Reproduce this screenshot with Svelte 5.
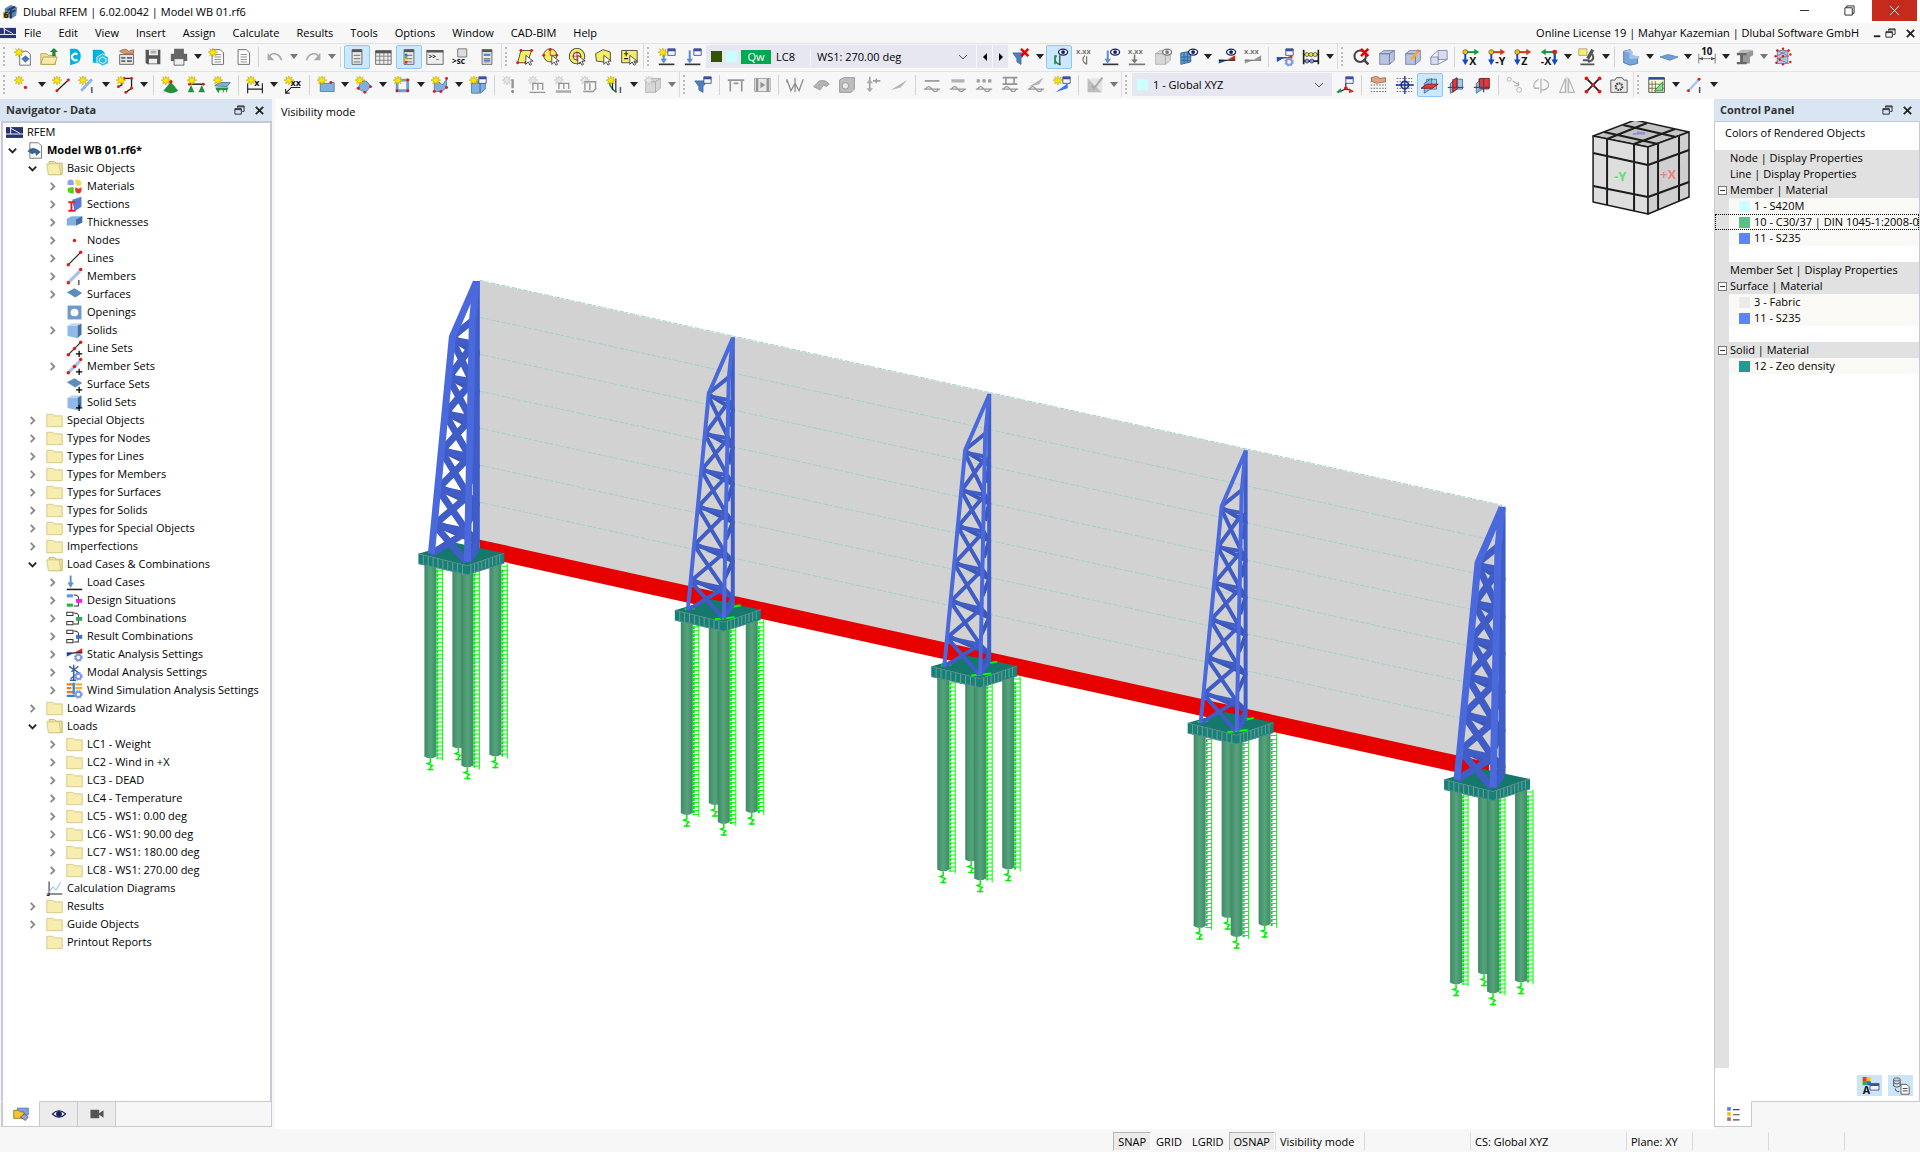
<script>
    const menus = ['File', 'Edit', 'View', 'Insert', 'Assign', 'Calculate', 'Results', 'Tools', 'Options', 'Window', 'CAD-BIM', 'Help']

    // little pieces shared by many toolbar icons
    const star = '<path d="M6 0l1 3 3-2-1.5 3L12 5 8.5 6.3 10 9.5 7 7.8 6 11 5 7.800 2 9.500 3 6.300 0 5l3.500-1L2 1l3 2z" fill="#ffe600" stroke="#b09a10" stroke-width=".6"/>'
    const dot = (x, y, r = 1.8) => `<circle cx="${x}" cy="${y}" r="${r}" fill="#e01818"/>`
    const line = (d, c = '#222', w = 1.4) => `<path d="${d}" fill="none" stroke="${c}" stroke-width="${w}"/>`
    const fill = (d, c, s = 'none') => `<path d="${d}" fill="${c}" stroke="${s}"/>`
    const label = (t, x, y, s = 9, c = '#111') => `<text x="${x}" y="${y}" font-size="${s}" font-weight="700" fill="${c}">${t}</text>`
    const eye = '<ellipse cx="16" cy="5" rx="5.500" ry="3.600" fill="#fff" stroke="#17205f" stroke-width="1.600"/><circle cx="16" cy="5" r="2.400" fill="#17205f"/>'
    const win = '<path d="M12 1h9v8h-9z" fill="#f4f6ff" stroke="#3a4374"/><path d="M12 1h9v3h-9z" fill="#3a4fa8"/>'
    const cursor = '<path d="M12 9v11l3-3 2 4 2-1-2-4h4z" fill="#fff" stroke="#333"/>'
    const load = line('M7 3v12', '#5b8fd0', 2.5) + fill('M3 13h8l-4 6z', '#5b8fd0') + line('M1 20h19', '#333', 2)
    const funnel = fill('M1 6h15l-5 7v7l-5-3v-4z', '#4f7fc0', '#44699c')
    const cross = line('M11 1l9 9M20 1l-9 9', '#e80000', 3)
    const gridDots = line('M2 3h19M2 7h19M2 11h19M2 15h19M2 19h19', '#555', 1).replace('/>', ' stroke-dasharray="2 1.500"/>')
    const panel = (x) => `<path d="M${x} 2h12v18h-12z" fill="#e8e8e8" stroke="#555"/><path d="M${x} 2h12v3h-12z" fill="#555"/>` + line(`M${x + 2} 9h8M${x + 2} 13h8M${x + 2} 17h8`, '#888', 1.5)
    const box = fill('M2 7h12v13H2zM2 7l5-4h13l-6 4zM14 7l6-4v12l-6 5z', '#b9c3e0', '#7480a5')
    const sheet = fill('M5 2h10l4 4v14H5z', '#fff', '#555') + line('M8 8h8M8 11h8M8 14h8M8 17h8', '#777', 1)
    const planes = fill('M7 4h12v12H7z', '#a6cbea', '#3c6b96') + fill('M4 9l9-6v12l-9 6z', '#8bb9de', '#3c6b96')
    const wave = line('M3 16q4-6 8 0t8 0M1 16h20', '#555', 1.4)
    const gear = (x, y) => `<circle cx="${x}" cy="${y}" r="3.500" fill="none" stroke="#7e9ae6" stroke-width="2.500"/><circle cx="${x}" cy="${y}" r="5" fill="none" stroke="#7e9ae6" stroke-width="1.500" stroke-dasharray="2 2"/>`
    const axes = (a, b, t, flip) => (flip
        ? line('M18 5H5M18 5v10', a, 2.4) + fill('M7 1v8L1 5z', a) + line('M18 5v10', b, 2.4) + fill('M14 14h8l-4 7z', b) + dot(18, 5, 3)
        : line('M4 5h12', a, 2.4) + fill('M15 1v8l6-4z', a) + line('M4 5v10', b, 2.4) + fill('M0 14h8l-4 7z', b) + `<circle cx="4" cy="5" r="3" fill="#f4c400" stroke="#333" stroke-width=".7"/>`)
        + label(t, flip ? 1 : 9, 21, 13)

    const icons = {
        new: fill('M7 4h9l4 4v13H7z', '#fff', '#556') + fill('M9 13l5-4 5 4-5 5z', '#4b78ad') + star,
        open: fill('M1 7h7l2 2h9v11H1z', '#efe39a', '#ad9d4c') + fill('M1 20l3-9h17l-3 9z', '#f5eaa9', '#ad9d4c') + fill('M15 10V5h-3l5-5 5 5h-3v5z', '#228a36'),
        dlubal: fill('M5 1h7q6 2 6 9t-6 9l-7 2z', '#00b3df') + '<path d="M14 8a4 4 0 1 0 0 6" fill="none" stroke="#fff" stroke-width="2.500"/>',
        cloud: fill('M1 2h9q5 1 6 6l-7 10H1z', '#00b3df') + fill('M13 7l7 4v8l-7 3-7-4v-7z', '#2abde4', '#fff') + line('M13 11l4 2v4l-4 2-4-2v-4z', '#fff', 1),
        block: fill('M2 8h17v12H2z', '#e6e6e6', '#555') + fill('M2 4q7-5 11 0l6-2v5H8z', '#d99873', '#94654b') + line('M4 12h5M11 12h6M4 16h5M11 16h6', '#666', 2),
        save: fill('M2 2h18v18H4l-2-2z', '#555') + fill('M6 2h11v7H6zM6 13h10v6H6z', '#f0f0f0') + line('M8 4h7M8 6h7', '#777', 1),
        print: fill('M5 1h12v6H5zM1 7h20v9H1z', '#666') + fill('M5 13h12v8H5z', '#eee', '#555'),
        report: sheet + star,
        doc: sheet,
        undo: line('M3 12c3-7 13-7 16 3', '#aaa', 2) + fill('M2 6v9h8z', '#aaa'),
        redo: line('M3 15C6 5 16 5 19 12', '#aaa', 2) + fill('M20 6v9h-8z', '#aaa'),
        navi: panel(5), tables: fill('M2 3h19v17H2z', '#eee', '#555') + line('M2 5h19', '#555', 3) + line('M2 10h19M2 15h19M7 6v14M12 6v14M17 6v14', '#777', 1),
        colors: panel(5) + fill('M6 7h3v3H6z', '#3366ff') + fill('M6 10h3v3H6z', '#36b34a') + fill('M6 13h3v3H6z', '#ffd400') + fill('M6 16h3v3H6z', '#e32222'),
        console: fill('M1 3h20v17H1z', '#eee', '#555') + line('M1 4h20', '#555', 3) + label('&gt;&gt;_', 3, 14, 8),
        script: fill('M7 1h11v10H7z', '#ddd', '#666') + label('&gt;sc', 0, 20, 10),
        pages: panel(5) + line('M7 8h8M7 15h8', '#4b82d0', 2),
        selPoly: fill('M6 3h13l-5 15H2z', '#f6ee62', '#333') + dot(6, 3) + dot(19, 3) + dot(2, 18) + dot(12, 18) + cursor,
        selCircle: '<circle cx="10" cy="9" r="8" fill="#f6ee62" stroke="#333"/>' + line('M10 1v8h8', '#e01818', 1) + dot(10, 2) + dot(18, 9) + dot(2, 9) + cursor,
        selRing: '<circle cx="11" cy="10" r="7" fill="none" stroke="#333" stroke-width="6"/><circle cx="11" cy="10" r="7" fill="none" stroke="#f6ee62" stroke-width="4"/>' + line('M5 10h12M11 4v12', '#e01818', 1) + cursor,
        selLasso: fill('M2 7l9-5 9 3v10l-8 2-9-1z', '#f6ee62', '#333') + cursor,
        selSpec: fill('M2 3h19v15H2z', '#f6ee62', '#333') + line('M5 7h5M7.500 4v6M5 13h5', '#222', 1.3) + cursor,
        lcNew: load + star + win, lc: load + win,
        filterOff: funnel + cross,
        showLoad: line('M6 20V9M13 20c-8-1-8-8-5-11', '#24964b', 2) + line('M12 21V9', '#333', 1.4) + eye,
        values: label('x.xx', 0, 7, 9, '#777') + line('M13 20q-8-5-2-11M13 20V10', '#777', 1.5),
        loadEye: load + eye, loadVal: label('x.xx', 0, 7, 9, '#777') + line('M8 8v8', '#777', 2) + fill('M4 14h8l-4 5z', '#777') + line('M1 20h20', '#777', 2),
        solidEye: box + eye, gridEye: fill('M1 6l12-2v13l-12 3z', '#5d9fd6', '#2e5c8d') + line('M5 5v14M9 5v13M1 11h13M1 15h13', '#2e5c8d', 1) + eye,
        resEye: fill('M1 19v-5l11 1z', '#2449b8') + fill('M12 14l9-5v6z', '#cc2a1a') + line('M1 15h20', '#222') + eye,
        resVal: label('x.xx', 0, 7, 9, '#777') + fill('M1 19v-5l10 1zM12 14l9-5v6z', '#999') + line('M1 15h20', '#777'),
        resSet: win + line('M1 12h15', '#222') + fill('M1 17v-5l9 0z', '#2449b8') + fill('M12 12l8-3v4z', '#cc2a1a') + gear(16, 17),
        abacus: line('M2 2v18M20 2v18M2 8h18M2 16h18', '#222', 2) + '<g stroke="#222" stroke-width=".7"><circle cx="6" cy="8" r="2.500" fill="#f1df4c"/><circle cx="11" cy="8" r="2.500" fill="#f1df4c"/><circle cx="16" cy="8" r="2.500" fill="#f1df4c"/><circle cx="6" cy="16" r="2.500" fill="#7f97de"/><circle cx="12" cy="16" r="2.500" fill="#7f97de"/></g>',
        zoomOff: '<circle cx="10" cy="10" r="7" fill="none" stroke="#444" stroke-width="2.500"/>' + line('M14 14l6 6', '#444', 3) + cross,
        box, boxEdit: box + line('M9 14l8-10', '#f0b020', 3.5) + line('M16 5l2-3', '#e57a9a', 3), boxes: fill('M1 11h9v9H1zM10 3h11v11H10z', '#d7ddf0', '#7480a5') + line('M1 11l9-8M10 20l11-6', '#7480a5', 1),
        vx: axes('#149b46', '#1648c4', 'X'), vy: axes('#d43a1c', '#1648c4', '-Y'), vz: axes('#d43a1c', '#1648c4', 'Z'), vmx: axes('#149b46', '#1648c4', '-X', true),
        micro: fill('M1 1h10v8H1z', '#fff15c', '#999') + line('M12 13l6-11', '#555', 4) + line('M17 7q5 8-5 10M3 20h17M6 15h8', '#555', 2.4),
        render: fill('M2 4l8-2v7l9 2v8l-9 2-8-3z', '#7aa5dc', '#4a73a8') + fill('M2 4l8-2 3 2v5l8 1v3H9V6z', '#a4c4ea'),
        plate: fill('M0 11l10-3 12 3-10 4z', '#6d9fd0', '#5684b5'),
        dim10: label('10', 4, 9, 12) + line('M1 7v12M21 7v12M1 13h20', '#666', 1) + fill('M1 13l5-2v4zM21 13l-5-2v4z', '#555'),
        beam: fill('M9 3h12v6l-4 2v8H9z', '#999') + fill('M1 6h12v3H9v8h4v3H1v-3h4V9H1z', '#666') + fill('M1 6l6-4h14l-8 4z', '#bbb'),
        cage: fill('M4 3h13v16H4z', '#b8c4dc', '#6b7ca3') + line('M4 3l14 7-14 3 14 6M17 3L3 10', '#778', 1) + [[4, 3], [11, 1], [18, 3], [2, 10], [11, 10], [20, 8], [3, 18], [11, 20], [20, 17], [7, 14]].map(([x, y]) => dot(x, y, 1.5)).join(''),
        node: star + dot(14, 14, 2),
        line: line('M6 18L20 5', '#222', 1.6) + dot(6, 18) + dot(20, 5) + star,
        member: line('M4 18L17 4', '#8db5e6', 3.5) + label('I', 15, 21, 11, '#445') + star,
        poly: line('M10 3h9v12l-7 5M7 3v8l-4 2', '#222', 1.6) + dot(10, 3) + dot(19, 3) + dot(19, 15) + dot(12, 20) + dot(3, 13) + star,
        nodeSup: fill('M12 7l9 11q-8 6-18 0z', '#239040') + dot(12, 7, 2.2) + star,
        lineSup: line('M3 10h17', '#222', 1.8) + dot(3, 10) + dot(20, 10) + fill('M5 11l4 9H1zM18 11l4 9h-8z', '#239040') + star,
        surfSup: fill('M2 12l5-4h14l-4 5z', '#7fb0e0', '#3c6ea0') + fill('M3 14h16l-3 7v-4h-2l-2 4v-4H8l-1 4-3-4z', '#239040') + star,
        dimX: label('x', 10, 12, 11) + line('M2 9v12M20 9v12M2 16h18', '#222') + star,
        dimXX: label('xx', 8, 12, 11) + line('M20 14H9l-7 7M2 16v5h5', '#222') + star,
        surf: fill('M4 9h13v-1h4v11H4z', '#7fb0e0', '#4a78ab') + dot(17, 8) + star,
        curved: fill('M6 8q8-6 13 5l-6 7-9-4z', '#7fb0e0', '#4a78ab') + dot(8, 6) + dot(19, 13) + dot(12, 20) + dot(4, 15) + star,
        opening: line('M5 5h13v13H5z', '#6c9ed0', 3.5) + dot(5, 5) + dot(18, 5) + dot(5, 18) + dot(18, 18) + star,
        solid: fill('M4 8h7l3 3 5-7v10l-6 5H4z', '#7fb0e0', '#4a78ab') + dot(19, 3) + dot(12, 19) + dot(4, 19) + dot(19, 14) + star,
        solidWin: fill('M3 9h10v12H3zM3 9l4-4h12l-5 4v12l6-5V6z', '#7fb0e0', '#4a78ab') + win + star,
        loadN: star + line('M13 4v11', '#555', 3) + dot(13, 19),
        loadM: star + line('M5 9h14M6 9v8M12 9v8M18 9v8M2 20h19', '#555', 1.6),
        loadS: star + line('M5 9h14M6 9v7M12 9v7M18 9v7', '#555', 1.6) + line('M2 19h19', '#777', 3),
        loadB: star + line('M5 7h14v10M6 9v8M12 9v8M4 19h12l4-4', '#555', 1.7),
        impf: line('M5 4q-3 9 8 16', '#1f8c3b', 2) + line('M8 3v14M12 3v16', '#222', 1.4) + label('I', 16, 21, 10, '#444') + star,
        wind: box + star,
        funnelWin: funnel + win,
        frame: line('M4 19V5h14v14M1 5h20M8 9h6', '#555', 2), film: fill('M2 3h19v16H2z', '#ddd', '#555') + line('M5 3v16M18 3v16', '#555', 3) + fill('M9 7l6 4-6 4z', '#555'),
        moment: line('M1 4l5 14 5-9 5 9 5-14M1 4v4M11 2v18', '#444', 1.5), shell: fill('M2 13l7-7q8-2 12 4l-3 3-4-2-4 6z', '#888', '#555'),
        cube: fill('M2 5l5-3h13v14l-4 4H2z', '#999', '#444') + '<circle cx="9" cy="12" r="4" fill="#ddd" stroke="#444"/>',
        react: line('M7 1v16M11 6h9M15 3v6', '#666', 2) + fill('M7 20l-4-5h8zM7 4L3 9h8z', '#777'), slim: fill('M1 17L21 5 13 14z', '#888'),
        r1: line('M2 6h18', '#555', 2) + wave, r2: line('M3 6h16', '#888', 4) + wave, r3: line('M2 6h4M9 6h4M16 6h4', '#666', 4) + wave,
        r4: line('M2 2h18M6 2v8M16 2v8M2 10h18', '#555', 2) + wave, r5: fill('M2 13L20 2l-5 8z', '#888') + wave,
        resNew: star + win + fill('M3 20L18 9v6z', '#4272e8'), edit: fill('M2 3h18v17H2z', '#d8d8d8') + fill('M2 3v17h17z', '#999') + line('M7 12l3 3L20 2', '#777', 2.4),
        csNew: win + line('M12 9v7l8 2M12 16l-10 4', '#222') + dot(12, 15, 2.3) + fill('M0 20l6-5 1 5z', '#149b46') + fill('M22 19l-6-4v6z', '#d43a1c'),
        gridHand: gridDots + fill('M3 2q8-3 10 1l7-1v5L9 9 3 6z', '#e0a47c', '#9b694c'), snap: gridDots + '<circle cx="12" cy="11" r="4.500" fill="#eee" stroke="#1a2f91" stroke-width="2"/>' + line('M12 0v22M1 11h22', '#1a2f91', 1.6),
        pXY: planes + fill('M0 15l7-5h14l-7 5z', '#ed3636', '#711'), pXZ: planes + fill('M7 6l5-4v14l-5 4z', '#ed3636', '#711') + line('M1 14h19', '#28517a', 1.5), pYZ: planes + fill('M8 3h12v12H8z', '#ed3636', '#711') + line('M1 14h19M13 3v17', '#28517a', 1.5),
        move: '<circle cx="4" cy="4" r="2.500" fill="none" stroke="#777"/><circle cx="16" cy="17" r="3" fill="none" stroke="#777"/>' + line('M8 6l8 5M15 7v5h-5', '#777', 1.3),
        rotate: line('M8 4q-8 5-5 11h6M14 4q8 3 6 9-2 4-8 4M11 3v18', '#888', 1.6), mirror: line('M9 3v17H2zM13 3v17h7z', '#888', 1.4) + line('M11 1v20', '#888', 1),
        cutx: line('M3 3l16 16M19 3L3 19', '#222', 2.2) + dot(3, 3, 2.3) + dot(19, 3, 2.3) + dot(3, 19, 2.3) + dot(19, 19, 2.3) + dot(11, 11, 2.3),
        camera: fill('M1 5h5l2-3h7l2 3h4v15H1z', '#e9e9e9', '#444') + '<circle cx="11" cy="13" r="4" fill="none" stroke="#444" stroke-width="2.500" stroke-dasharray="2 1"/>',
        design: fill('M1 2h19v18H1z', '#fffbd0', '#333') + line('M1 3h19', '#2c4d9a', 3) + line('M5 6v14M9 6v14M1 10h19M1 15h19', '#444', .8) + fill('M8 18h10V7z', '#83dd91', '#257a38'),
        memberI: line('M3 18L16 4', '#a5c7ef', 3) + dot(3, 18) + dot(16, 4) + label('I', 15, 21, 10, '#333'),
        // navigator
        app: fill('M0 4h22v14H0z', '#27346f') + line('M0 13h22M6 4v9M5 5l13 7', '#fff', 1.2),
        model: fill('M5 1h11l4 4v16H5z', '#fff', '#555') + fill('M2 12q6-9 17 1l-6 5-1-4-4 2z', '#39668f'),
        folder: fill('M1 3h8l2 2h10v14H1z', '#f6edae', '#cdbf78'),
        folderOpen: fill('M4 2h7l2 2h8v15H4z', '#eee29c', '#b9aa5e') + fill('M1 5h16l2 14H3z', '#f6edae', '#cdbf78'),
        mat: fill('M2 9q-1-7 4-7t4 7z', '#929ff0') + fill('M12 2q7 0 8 4t-4 4-4-8z', '#eee04a') + fill('M10 12v8q-7 1-8-4t8-4z', '#54cf1e') + fill('M12 12l4 2 4-2q1 8-4 8t-4-8z', '#e8362e'),
        sect: fill('M8 5l12-4v13l-9 6z', '#5b7ad5') + line('M3 8h9M7 8v11M3 19h9', '#e12424', 2.5),
        thick: fill('M1 6l6-3h14v8l-8 4H1z', '#83b0e2') + fill('M13 7l8-4v8l-8 4z', '#416fa6'),
        nd: dot(11, 11, 2.2), ln: line('M4 18L19 3', '#222', 1.5) + dot(3, 19, 2.2) + dot(19, 3, 2.2),
        mem: line('M3 19L18 4', '#a5c3ea', 4) + dot(3, 19, 2.2) + dot(19, 2, 2.2) + label('I', 15, 22, 10, '#333'),
        srf: fill('M1 8l10-5 10 6-9 6z', '#5b8dbd'), opn: fill('M2 2h18v18H2z', '#6f9bc9') + '<circle cx="11" cy="11" r="5" fill="#fff"/>',
        sld: fill('M2 5h13v16L2 18z', '#8fb9e8') + fill('M2 5l5-3h13l-5 3z', '#b5d2f2') + fill('M15 5l5-3v14l-5 5z', '#426fa5'),
        calc: line('M4 2v18H1M1 18h20', '#222', 1.3) + line('M4 16l5-7 4 4 6-10', '#9fcaf5', 1.5),
        ldc: line('M6 2v10', '#5b8fd0', 2.5) + fill('M2 11h8l-4 7z', '#5b8fd0') + line('M1 20h20', '#222', 2),
        modal: line('M10 1v20M4 3l12 8-10 8M5 21h8M16 3l-9 7', '#315f9e', 1.8) + gear(16, 16),
        stat: fill('M1 14V9l9 0z', '#2449b8') + fill('M10 9l11-6v6z', '#cc2a1a') + line('M1 9h20', '#222') + gear(16, 15),
        simu: line('M1 3h8M1 8h6M1 13h8', '#ef7c1a', 3) + line('M12 3h9M12 8h9', '#f2b12e', 3) + line('M1 18h12M10 1v15', '#3a85cb', 3) + gear(16, 16),
        eye: '<path d="M2 11q9-9 18 0-9 9-18 0z" fill="#fff" stroke="#17205f" stroke-width="1.500"/><circle cx="11" cy="11" r="4" fill="#17205f"/>',
        video: fill('M2 5h12v12H2zM14 10l6-4v10l-6-4z', '#555'),
        data: fill('M6 3h15v9H6z', '#7fa5e8', '#3561b8') + fill('M1 6h7l2 2h5v9H1z', '#f3c72d', '#7a6010') + fill('M10 15l6-4 5 4-4 5z', '#7db0d8', '#b02a2a'),
        legend: line('M3 4h5', '#4e83f0', 5) + line('M3 11h5', '#f2c500', 5) + line('M3 18h5', '#bb6464', 5) + line('M11 5h9M11 12h9M11 19h9', '#444', 1.6),
        palette: fill('M2 0h5v5H2z', '#e33') + fill('M7 0h5v5H7z', '#fc0') + fill('M2 5h5v5H2z', '#3a3') + fill('M7 5h5v5H7z', '#36d') + label('A', 2, 21, 13) + fill('M11 8h11v8H11z', '#f4f6ff', '#3a4374') + fill('M11 8h11v3H11z', '#3a4fa8'),
        dbdoc: '<ellipse cx="6" cy="3" rx="4" ry="2" fill="#ccc" stroke="#555"/>' + line('M2 3v8q4 3 8 0V3M2 7q4 3 8 0', '#555', 1.2) + fill('M11 9h7l3 3v9H11z', '#fff', '#444') + line('M13 14h6M13 17h6M4 14q0 4 5 4', '#444', 1.2)
    }
    const combo = (a, b) => (a ? fill('M1 3h8v4H1z', a) + fill('M1 15h8v4H1z', a === '#fff' ? a : '#2fae48') : '')
        + line('M1 3h8v4H1zM1 15h8v4H1z', '#333', a === '#fff' ? 1.3 : 0) + line('M10 4q8 0 6 6M10 18h6v-5', '#333', 1.3) + fill('M13 9h8v5h-8z', b)
    icons.design2 = combo('#5d92ee', '#f01ff0')
    icons.loadc = combo('#fff', '#2fae48')
    icons.resc = combo('#fff', '#3c6fd0')
    const plus = line('M17 14v8M13 18h8', '#000', 1.6)
    icons.lnSet = icons.ln + dot(11, 11, 2.2) + plus
    icons.memSet = line('M3 19L18 4', '#a5c3ea', 4) + dot(3, 19, 2.2) + dot(11, 11, 2.2) + dot(19, 2, 2.2) + plus
    icons.srfSet = icons.srf + plus
    icons.sldSet = icons.sld + plus

    // | separator, v drop-down arrow, # new group, ! pressed, ~ disabled, @ combo box
    const parse = (s) => s.split(' ').map((t) => ({ on: t[0] === '!', off: t[0] === '~', name: t.replace(/^[!~]/, '') }))
    const rows = [
        parse('new open dlubal cloud block save print v report doc | undo ~v redo ~v | !navi tables !colors console script pages # selPoly selCircle selRing selLasso selSpec # lcNew lc @lc filterOff v !showLoad values loadEye loadVal ~solidEye gridEye v resEye resVal | resSet abacus v # zoomOff box boxEdit boxes | vx vy vz vmx v micro v | render v plate v dim10 v beam ~v cage'),
        parse('node v line member v poly v | nodeSup lineSup surfSup | dimX v dimXX | surf v curved v opening v solid v solidWin | ~loadN ~loadM ~loadS ~loadB impf v ~wind ~v # funnelWin | ~frame ~film | ~moment ~shell ~cube ~react ~slim | ~r1 ~r2 ~r3 ~r4 ~r5 resNew | ~edit ~v # @cs csNew | gridHand snap !pXY pXZ pYZ | ~move ~rotate ~mirror cutx camera # design v memberI v')
    ]

    // depth, icon, text, chevron (0 none, 1 closed, 2 open)
    const F = 'folder', O = 'folderOpen'
    const tree = [
        [0, 'model', 'Model WB 01.rf6*', 2], [1, O, 'Basic Objects', 2],
        [2, 'mat', 'Materials', 1], [2, 'sect', 'Sections', 1], [2, 'thick', 'Thicknesses', 1], [2, 'nd', 'Nodes', 1],
        [2, 'ln', 'Lines', 1], [2, 'mem', 'Members', 1], [2, 'srf', 'Surfaces', 1], [2, 'opn', 'Openings', 0],
        [2, 'sld', 'Solids', 1], [2, 'lnSet', 'Line Sets', 0], [2, 'memSet', 'Member Sets', 1],
        [2, 'srfSet', 'Surface Sets', 0], [2, 'sldSet', 'Solid Sets', 0],
        [1, F, 'Special Objects', 1], [1, F, 'Types for Nodes', 1], [1, F, 'Types for Lines', 1], [1, F, 'Types for Members', 1],
        [1, F, 'Types for Surfaces', 1], [1, F, 'Types for Solids', 1], [1, F, 'Types for Special Objects', 1], [1, F, 'Imperfections', 1],
        [1, O, 'Load Cases & Combinations', 2], [2, 'ldc', 'Load Cases', 1], [2, 'design2', 'Design Situations', 1],
        [2, 'loadc', 'Load Combinations', 1], [2, 'resc', 'Result Combinations', 1], [2, 'stat', 'Static Analysis Settings', 1],
        [2, 'modal', 'Modal Analysis Settings', 1], [2, 'simu', 'Wind Simulation Analysis Settings', 1],
        [1, F, 'Load Wizards', 1], [1, O, 'Loads', 2],
        [2, F, 'LC1 - Weight', 1], [2, F, 'LC2 - Wind in +X', 1], [2, F, 'LC3 - DEAD', 1], [2, F, 'LC4 - Temperature', 1],
        [2, F, 'LC5 - WS1: 0.00 deg', 1], [2, F, 'LC6 - WS1: 90.00 deg', 1], [2, F, 'LC7 - WS1: 180.00 deg', 1], [2, F, 'LC8 - WS1: 270.00 deg', 1],
        [1, 'calc', 'Calculation Diagrams', 0], [1, F, 'Results', 1], [1, F, 'Guide Objects', 1], [1, F, 'Printout Reports', 0]
    ]

    const legend = [
        { t: 'Node | Display Properties' }, { t: 'Line | Display Properties' }, { t: 'Member | Material', box: true },
        { t: '1 - S420M', c: '#ccffff' }, { t: '10 - C30/37 | DIN 1045-1:2008-08', c: '#5bbd87', sel: true }, { t: '11 - S235', c: '#5b84ff' }, {},
        { t: 'Member Set | Display Properties' }, { t: 'Surface | Material', box: true },
        { t: '3 - Fabric', c: '#ebebeb' }, { t: '11 - S235', c: '#5b84ff' }, {},
        { t: 'Solid | Material', box: true }, { t: '12 - Zeo density', c: '#219a90' }
    ]

    // lattice masts of the wall, all drawn from one template whose origin is the tip
    const masts = [0, 1, 2, 3, 4].map((i) => ({ x: 476.5 + 256.6 * i, y: 280 + 56.5 * i, heavy: i === 0 || i === 4 }))
    const L = [60, 98, 134, 171, 209, 245, 274]
    const R = [64, 102, 139, 177, 216, 252, 282]
    const lx = (y) => -24 - 21 * (y - 57) / 217
    const rx = (y) => -9 * y / 282 - 1
    let braces = 'M-24 57L-3 40'
    let back = ''
    for (let i = 0; i < 6; i++) {
        braces += `M${lx(L[i])} ${L[i]}L${rx(R[i])} ${R[i]}M${lx(L[i])} ${L[i]}L${rx(R[i + 1])} ${R[i + 1]}M${lx(L[i + 1])} ${L[i + 1]}L${rx(R[i])} ${R[i]}`
        back += `M${lx(L[i])} ${L[i] - 2}L0 ${R[i] + 9}M${rx(R[i])} ${R[i] + 26}L0 ${R[i] + 9}L${rx(R[i])} ${R[i]}`
    }
    const piles = [
        { x: -24, w: 12, b: 467 }, { x: -52, w: 12, b: 477, l: -40 }, { x: 13, w: 12, b: 475, l: 25 }, { x: -15, w: 12, b: 486, l: -3 }
    ]
    let ticks = ''
    for (let i = 1; i < 10; i++) ticks += `M${-58 + i * 4.9} ${272 + i * 1.25}v10M${-9 + i * 3.6} ${284 - i * 1.3}v9`
</script>

{#snippet icon(name)}
    <svg class="icon" viewBox="0 0 22 22" aria-hidden="true">{@html icons[name]}</svg>
{/snippet}

{#snippet winButtons()}
    <span class="win-buttons">
        <button aria-label="Float"><svg viewBox="0 0 12 12"><path d="M4 3V1h7v6H9M1 4h7v6H1zM1 5h7M4 2h7" /></svg></button>
        <button aria-label="Close"><svg viewBox="0 0 12 12"><path d="M2 2l8 8M10 2l-8 8" stroke-width="2" /></svg></button>
    </span>
{/snippet}

<div class="window">
    <header class="title-bar">
        <svg class="logo" viewBox="0 0 18 18"><path d="M3 5l7-4 7 3-1 9-6 4-7-4z" fill="#5d82ad" /><path d="M6 7l9-4M7 11l8-4M10 16V6" stroke="#223c66" stroke-width="2" /><path d="M1 9h6v7H1z" fill="#d9b32a" /><text x="2" y="16" font-size="9" font-weight="700">6</text></svg>
        <span>Dlubal RFEM | 6.02.0042 | Model WB 01.rf6</span>
        <div class="system">
            <button aria-label="Minimize"><svg viewBox="0 0 12 12"><path d="M1 6h10" /></svg></button>
            <button aria-label="Restore"><svg viewBox="0 0 12 12"><path d="M1 3h8v8H1zM3 3V1h8v8H9" /></svg></button>
            <button class="quit" aria-label="Close"><svg viewBox="0 0 12 12"><path d="M1 1l10 10M11 1L1 11" /></svg></button>
        </div>
    </header>

    <nav class="menu-bar">
        {@render icon('app')}
        <div class="menus">
            {#each menus as menu}
                <button>{menu}</button>
            {/each}
        </div>
        <span class="license">Online License 19 | Mahyar Kazemian | Dlubal Software GmbH</span>
        <button class="mini" aria-label="Minimize model"><svg viewBox="0 0 12 12"><path d="M2 9h7" stroke-width="2" /></svg></button>
        {@render winButtons()}
    </nav>

    {#each rows as row}
        <div class="toolbar" role="toolbar">
            <i class="grip"></i>
            {#each row as item}
                {#if item.name === '|'}
                    <i class="sep"></i>
                {:else if item.name === '#'}
                    <i class="group"></i><i class="grip"></i>
                {:else if item.name === 'v'}
                    <button class="more" class:off={item.off} aria-label="More"></button>
                {:else if item.name === '@lc'}
                    <div class="load-case">
                        <i class="swatch dark"></i><i class="swatch"></i><b>Qw</b><span>LC8</span>
                        <select aria-label="Load case"><option>WS1: 270.00 deg</option></select>
                        <button class="prev" aria-label="Previous"></button>
                        <button class="next" aria-label="Next"></button>
                    </div>
                {:else if item.name === '@cs'}
                    <div class="load-case coords">
                        <i class="swatch"></i>
                        <select aria-label="Coordinate system"><option>1 - Global XYZ</option></select>
                    </div>
                {:else}
                    <button class="tool" class:on={item.on} class:off={item.off} aria-label={item.name}>{@render icon(item.name)}</button>
                {/if}
            {/each}
        </div>
    {/each}

    <main>
        <aside class="navigator">
            <h2>Navigator - Data {@render winButtons()}</h2>
            <div class="nav-body">
                <ul>
                    <li class="root">{@render icon('app')}<span>RFEM</span></li>
                    {#each tree as [depth, name, text, chev]}
                        <li class:model={depth === 0} class:level1={depth === 1} class:level2={depth === 2}>
                            <svg class="chev" class:open={chev === 2} viewBox="0 0 12 12">
                                {#if chev}<path d={chev === 2 ? 'M2 4l4 4 4-4' : 'M4 2l4 4-4 4'} />{/if}
                            </svg>
                            {@render icon(name)}<span>{text}</span>
                        </li>
                    {/each}
                </ul>
            </div>
            <div class="tabs">
                <button class="current" aria-label="Data">{@render icon('data')}</button>
                <button aria-label="Display">{@render icon('eye')}</button>
                <button aria-label="Views">{@render icon('video')}</button>
                <i></i>
            </div>
        </aside>

        <section class="viewport">
            <p>Visibility mode</p>
            <svg class="scene" viewBox="275 121 1440 1008" preserveAspectRatio="xMinYMin meet">
                <defs>
                    <linearGradient id="pile"><stop offset="0" stop-color="#3f8a66" /><stop offset=".5" stop-color="#55a57c" /><stop offset="1" stop-color="#41896a" /></linearGradient>
                    <g id="pad">
                        {#each piles as p}
                            <path d="M{p.x} 276V{p.b - 2}q{p.w / 2} 4 {p.w} 0V276z" fill="url(#pile)" />
                            <path d="M{p.x + 6} {p.b}v4l-3 1 5 2-2 2v3M{p.x + 3} {p.b + 11}h6" fill="none" stroke="#0e0" stroke-width="1.500" />
                            {#if p.l}
                                <path d="M{p.l + 1} 288V{p.b}" stroke="#0d2" stroke-width="2" stroke-dasharray="3 1" />
                                <path d="M{p.l + 3} 284V{p.b}" stroke="#0f0" stroke-width="6" stroke-dasharray="1 3" />
                                <path d="M{p.l + 6} 282V{p.b + 2}" stroke="#0f0" />
                            {/if}
                        {/each}
                        <path d="M-58 272L-21 261 28 271.500-9 284z" fill="#14786c" />
                        <path d="M-58 272L-9 284 28 271.500v10L-9 293-58 282z" fill="#178077" />
                        <path d={ticks} stroke="#6b9f98" />
                        <path d="M-58 272L-9 284 28 271.500M-58 282L-9 293 28 281.500" fill="none" stroke="#5a8c88" />
                    </g>
                    <g id="lattice" fill="none" stroke-linejoin="round">
                        <path d={back} stroke="#3d57b8" />
                        <path d={braces} stroke="#405cc6" />
                        <path d="M0 1V269M0 269L-9 282" stroke="#3f5dc8" />
                        <path d="M0 2L-24 57L-45 274M0 2L-4 42L-9 282" stroke="#4a69dc" />
                    </g>
                </defs>
                <path d="M480 281L1503 506V767L480 541z" fill="#d2d2d2" />
                {#each [0, 37, 74, 111, 148, 185, 222] as y}
                    <path d="M480 {280.5 + y}L1503 {505.5 + y}" stroke="#9fcfcf" stroke-dasharray="5 1 3 2" />
                {/each}
                <path d="M480 540L1490 763V780L480 557z" fill="#e60000" />
                {#each masts as m}
                    <g transform="translate({m.x} {m.y})">
                        <use href="#pad" y="2" />
                        {#if !m.heavy}<path d="M-48 273l10-1M-18 283l20-2M-2 271l10-2" stroke="#0f0" stroke-width="2" />{/if}
                        <use href="#lattice" stroke-width={m.heavy ? 7 : 4} />
                    </g>
                {/each}

                <g stroke="#1c1c1c" stroke-width="1.500" stroke-linejoin="round">
                    <path d="M1594 136L1636 120 1690 132 1649 147z" fill="#c4c4c4" />
                    <path d="M1594 136L1649 147V214L1594 202z" fill="#dedede" />
                    <path d="M1649 147L1690 132V197L1649 214z" fill="#cfcfcf" />
                    <path d="M1608 139v66M1635 144v67M1594 153l55 12 41-15M1594 186l55 11 41-15M1659 143v67M1680 136v65M1608 139l40-16M1635 144l41-15M1605 132l54 12M1624 125l53 12" fill="none" stroke-width="2" />
                </g>
                <text x="1615" y="181" font-size="13" font-weight="700" fill="#5fe070">-Y</text>
                <text x="1661" y="179" font-size="13" font-weight="700" fill="#f08080">+X</text>
                <path d="M1634 134l12-1M1638 132l8 2" stroke="#8f90d8" stroke-width="2" />
            </svg>
        </section>

        <aside class="control">
            <h2>Control Panel {@render winButtons()}</h2>
            <div class="control-body">
                <p>Colors of Rendered Objects</p>
                <ul>
                    {#each legend as row}
                        <li class:head={row.t && !row.c} class:entry={row.c} class:selected={row.sel}>
                            <span class="gutter">{#if row.box}<svg viewBox="0 0 9 9"><path d="M0 0h9v9H0z" fill="#fff" stroke="#777" stroke-width="2" /><path d="M2 4.500h5" stroke="#333" /></svg>{/if}</span>
                            <span class="text">{#if row.c}<i style="background: {row.c}"></i>{/if}{row.t ?? ''}</span>
                        </li>
                    {/each}
                    <li class="rest"><span class="gutter"></span></li>
                </ul>
                <div class="actions">
                    <button aria-label="Edit colors">{@render icon('palette')}</button>
                    <button aria-label="Copy legend">{@render icon('dbdoc')}</button>
                </div>
            </div>
            <div class="tabs">
                <button class="current" aria-label="Legend">{@render icon('legend')}</button>
                <i></i>
            </div>
        </aside>
    </main>

    <footer>
        <button class="pressed">SNAP</button>
        <button>GRID</button>
        <button>LGRID</button>
        <button class="pressed">OSNAP</button>
        <span class="mode">Visibility mode</span>
        <span class="blank"></span>
        <span class="cs">CS: Global XYZ</span>
        <span class="plane">Plane: XY</span>
        <span class="cell"></span>
        <span class="cell"></span>
        <span class="cell"></span>
    </footer>
</div>

<style>
    :global(body) {
        margin: 0;
    }

    .window {
        display: flex;
        flex-direction: column;
        min-height: 100vh;
        background: #f7f7f7;
        color: #000;
        font-family: "Open Sans", "Noto Sans", sans-serif;
        font-size: 11px;
        line-height: 16px;
    }

    button, select {
        border: none;
        padding: 0;
        margin: 0;
        background: none;
        color: inherit;
        font: inherit;
    }

    ul, p, h2 {
        margin: 0;
        padding: 0;
        list-style: none;
    }

    .icon {
        width: 18px;
        height: 18px;
        flex: none;
        display: block;
        overflow: visible;
    }

    .title-bar {
        display: flex;
        align-items: center;
        height: 23px;
        background: #fff;
    }

    .logo {
        width: 16px;
        height: 16px;
        margin: 0 5px 0 2px;
    }

    .system {
        display: flex;
        align-self: stretch;
        margin-left: auto;
        padding-right: 3px;
    }

    .system button {
        width: 45px;
        height: 21px;
        display: flex;
        align-items: center;
        justify-content: center;
    }

    .system svg, .mini svg, .win-buttons svg {
        width: 11px;
        height: 11px;
        fill: none;
        stroke: #222;
        display: block;
    }

    .system .quit {
        background: #c42b1c;
    }

    .system .quit svg {
        stroke: #fff;
    }

    .menu-bar {
        display: flex;
        align-items: center;
        height: 20px;
        padding-right: 4px;
    }

    .menu-bar > .icon {
        width: 16px;
    }

    .menus {
        display: flex;
        gap: 17px;
        margin-left: 8px;
    }

    .license {
        margin: 0 13px 0 auto;
    }

    .mini {
        margin-right: 2px;
    }

    .win-buttons {
        display: flex;
        gap: 9px;
    }

    .toolbar {
        display: flex;
        align-items: center;
        height: 25px;
        padding-bottom: 2px;
        border-top: 1px solid #e3e3e3;
    }

    .grip {
        width: 3px;
        height: 19px;
        margin: 0 4px 0 3px;
        border-left: 2px dotted #bbb;
        box-sizing: border-box;
    }

    .group {
        width: 1px;
        align-self: stretch;
        background: #dcdcdc;
        margin-left: 1px;
    }

    .sep {
        width: 1px;
        height: 20px;
        background: #d4d4d4;
        margin: 0 3px 0 2px;
    }

    .toolbar + .toolbar .sep {
        margin: 0 3px;
    }

    .tool {
        width: 26px;
        height: 24px;
        display: flex;
        align-items: center;
        justify-content: center;
        flex: none;
        border: 1px solid transparent;
        box-sizing: border-box;
    }

    .tool.on {
        background: #cce8ff;
        border-color: #8fc8f4;
        border-radius: 2px;
    }

    .tool.off {
        filter: grayscale(1);
        opacity: 0.6;
    }

    .more {
        width: 12px;
        height: 22px;
        display: flex;
        align-items: center;
        justify-content: center;
    }

    .more::before {
        content: "";
        border: 4px solid transparent;
        border-top: 5px solid #222;
        border-bottom: 0;
    }

    .more.off::before {
        border-top-color: #777;
    }

    .load-case {
        display: flex;
        align-items: center;
        box-sizing: border-box;
        width: 302px;
        height: 23px;
        background: #e7e7f2;
        padding-left: 5px;
    }

    .swatch {
        width: 11px;
        height: 11px;
        margin-right: 4px;
        background: #ccffff;
        flex: none;
    }

    .swatch.dark {
        background: #335500;
    }

    .load-case b {
        width: 30px;
        height: 14px;
        line-height: 14px;
        margin-right: 5px;
        background: #00a94f;
        color: #fff;
        font-weight: 400;
        text-align: center;
    }

    .load-case span {
        width: 34px;
        border-right: 1px solid #f7f7f7;
    }

    .load-case select {
        flex: 1;
        height: 23px;
        appearance: none;
        padding-left: 6px;
        background: no-repeat right 8px center / 10px 6px url("data:image/svg+xml,%3Csvg xmlns='http://www.w3.org/2000/svg' viewBox='0 0 10 6'%3E%3Cpath d='M1 1l4 4 4-4' fill='none' stroke='%23555'/%3E%3C/svg%3E");
    }

    .coords {
        width: 200px;
    }

    .coords select {
        padding-left: 1px;
    }

    .prev, .next {
        width: 16px;
        height: 23px;
        display: flex;
        align-items: center;
        justify-content: center;
        border-left: 1px solid #f7f7f7;
    }

    .prev::before, .next::before {
        content: "";
        border: 4px solid transparent;
        border-right: 4px solid #000;
        border-left: 0;
    }

    .next::before {
        border-left: 4px solid #000;
        border-right: 0;
    }

    main {
        flex: 1;
        display: flex;
    }

    aside {
        display: flex;
        flex-direction: column;
    }

    h2 {
        display: flex;
        align-items: center;
        justify-content: space-between;
        box-sizing: border-box;
        height: 22px;
        padding: 0 7px 0 6px;
        background: #d9e5f2;
        color: #333;
        font-size: 11px;
        font-weight: 700;
    }

    .navigator {
        width: 272px;
        flex: none;
        margin-right: 3px;
    }

    .nav-body {
        flex: 1;
        margin-left: 1px;
        background: #fff;
        border: 2px solid #c8c8d6;
        border-bottom: 0;
    }

    .nav-body li {
        display: flex;
        align-items: center;
        height: 18px;
        white-space: nowrap;
    }

    .nav-body li .icon {
        width: 17px;
        height: 17px;
        margin: 0 4px;
    }

    .nav-body .root .icon {
        margin-left: 3px;
    }

    .model {
        font-weight: 700;
    }

    .level1 {
        padding-left: 20px;
    }

    .level2 {
        padding-left: 40px;
    }

    .chev {
        width: 11px;
        height: 11px;
        margin: 0 4px;
        fill: none;
        stroke: #8a8a8a;
        stroke-width: 2;
    }

    .chev.open {
        stroke: #222;
    }

    .tabs {
        display: flex;
        height: 26px;
        margin: 0 0 2px 1px;
    }

    .tabs i {
        flex: 1;
        border: 1px solid #c8c8d6;
        border-left: 0;
    }

    .tabs button {
        width: 38px;
        display: flex;
        align-items: center;
        justify-content: center;
        background: #ececec;
        border: 1px solid #c8c8d6;
        border-left: 0;
        box-sizing: border-box;
    }

    .tabs .current {
        width: 39px;
        background: #fff;
        border-top-color: #fff;
        border-left: 2px solid #c8c8d6;
    }

    .tabs .icon {
        width: 16px;
        height: 16px;
    }

    .viewport {
        flex: 1;
        min-width: 0;
        display: flex;
        flex-direction: column;
        background: #fff;
    }

    .viewport p {
        height: 17px;
        padding: 5px 0 0 6px;
    }

    .scene {
        width: 100%;
        flex: 1 1 0;
        min-height: 0;
        display: block;
    }

    .control {
        width: 206px;
        flex: none;
    }

    .control-body {
        flex: 1;
        display: flex;
        flex-direction: column;
        background: #fff;
        border: 1px solid #c8c8d6;
        border-bottom: 0;
    }

    .control-body p {
        padding: 3px 0 9px 10px;
    }

    .control-body ul {
        flex: 1;
        display: flex;
        flex-direction: column;
    }

    .control-body li {
        display: flex;
        height: 16px;
        white-space: nowrap;
    }

    .control-body .rest {
        flex: 1;
    }

    .gutter {
        width: 14px;
        flex: none;
        display: flex;
        align-items: center;
        justify-content: center;
        background: #e1e1e1;
    }

    .gutter svg {
        width: 9px;
        height: 9px;
    }

    .text {
        display: flex;
        align-items: center;
        flex: 1;
        min-width: 0;
        overflow: hidden;
        padding-left: 1px;
    }

    .head {
        background: #e1e1e1;
    }

    .entry .text {
        background: #faf9f5;
        padding-left: 10px;
    }

    .entry i {
        width: 11px;
        height: 11px;
        margin-right: 4px;
        flex: none;
    }

    .selected {
        outline: 1px dotted #000;
        outline-offset: -1px;
    }

    .actions {
        display: flex;
        justify-content: flex-end;
        gap: 6px;
        padding: 7px 6px 5px;
    }

    .actions button {
        width: 25px;
        height: 21px;
        display: flex;
        align-items: center;
        justify-content: center;
        background: #cce4f7;
    }

    .control .tabs {
        margin-left: 0;
    }

    .control .tabs i {
        border-width: 1px 0 0;
    }

    .control .tabs .current {
        width: 38px;
        border-left-width: 1px;
    }

    footer {
        display: flex;
        justify-content: flex-end;
        height: 23px;
        align-items: stretch;
    }

    footer > * {
        box-sizing: border-box;
        margin: 3px 0 1px;
        padding: 0 4px;
        border: 1px solid transparent;
        line-height: 17px;
    }

    footer .pressed {
        background: #ececec;
        border-color: #b5b5b5 #fff #fff #b5b5b5;
    }

    footer span {
        border-left-color: #dadada;
    }

    .mode {
        width: 89px;
    }

    .blank {
        width: 106px;
    }

    .cs {
        width: 156px;
    }

    .plane {
        width: 66px;
    }

    .cell {
        width: 76px;
    }
</style>
